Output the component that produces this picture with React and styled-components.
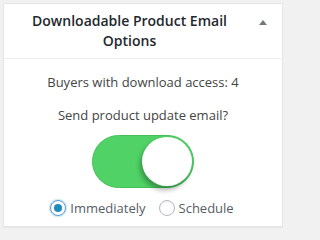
import React, { useState } from "react";
import styled, { createGlobalStyle } from "styled-components";

const Global = createGlobalStyle`
  html, body { margin: 0; padding: 0; background: #f1f1f1; }
  body { font-family: "Open Sans", "Liberation Sans", sans-serif; }
`;

const Box = styled.div`
  margin: 3px;
  width: 280px;
  height: 224px;
  box-sizing: border-box;
  background: #fff;
  border: 1px solid #e5e5e5;
  box-shadow: 0 1px 1px rgba(0, 0, 0, 0.04);
  display: flex;
  flex-direction: column;
`;

const Header = styled.div`
  display: flex;
  align-items: center;
  border-bottom: 1px solid #eee;
  padding: 7px 0 8px 11px;
`;

const Title = styled.h2`
  flex: 1;
  margin: 0;
  font-size: 14px;
  line-height: 19.5px;
  font-weight: 600;
  color: #23282d;
  text-align: center;
`;

const Toggle = styled.button`
  width: 38px;
  height: 36px;
  border: 0;
  background: none;
  padding: 0;
  display: flex;
  align-items: flex-start;
  justify-content: center;
  align-self: flex-start;
  padding-top: 9px;
`;

const Arrow = styled.span`
  width: 0;
  height: 0;
  border-left: 4px solid transparent;
  border-right: 4px solid transparent;
  border-bottom: 5px solid #72777c;
`;

const Body = styled.div`
  flex: 1;
  display: flex;
  flex-direction: column;
  align-items: center;
  padding-top: 13px;
  font-size: 13px;
  color: #444;
`;

const Line = styled.p`
  margin: 0 0 ${(p) => p.$gap}px;
  line-height: 20px;
`;

const Switch = styled.div`
  width: 102px;
  height: 53px;
  box-sizing: border-box;
  border-radius: 27px;
  background: #50d266;
  border: 1px solid #43c158;
  position: relative;
  margin-top: 10px;
`;

const Knob = styled.span`
  position: absolute;
  right: 1px;
  top: 1px;
  width: 50px;
  height: 49px;
  border-radius: 50%;
  background: #fff;
  box-shadow: -2px 4px 5px rgba(0, 0, 0, 0.3);
`;

const Radios = styled.div`
  display: flex;
  gap: 13px;
  margin-top: 10px;
  margin-left: -2px;
`;

const RadioLabel = styled.label`
  display: flex;
  align-items: center;
  gap: 4px;
  font-size: 13px;
  color: #555d66;
  line-height: 20px;
`;

const RadioDot = styled.span`
  width: 16px;
  height: 16px;
  box-sizing: border-box;
  border-radius: 50%;
  border: 1px solid ${(p) => (p.$focus ? "#5b9dd9" : "#b4b9be")};
  box-shadow: ${(p) =>
    p.$focus ? "0 0 2px rgba(30,140,190,.8)" : "inset 0 1px 2px rgba(0,0,0,.07)"};
  display: flex;
  align-items: center;
  justify-content: center;
  &::after {
    content: "";
    width: 8px;
    height: 8px;
    border-radius: 50%;
    background: #1e8cbe;
    display: ${(p) => (p.$checked ? "block" : "none")};
  }
`;

export default function App() {
  const [mode, setMode] = useState("now");
  return (
    <>
      <Global />
      <Box>
        <Header>
          <Title>Downloadable Product Email Options</Title>
          <Toggle aria-label="Toggle panel">
            <Arrow />
          </Toggle>
        </Header>
        <Body>
          <Line $gap={13}>Buyers with download access: 4</Line>
          <Line $gap={0}>Send product update email?</Line>
          <Switch>
            <Knob />
          </Switch>
          <Radios>
            <RadioLabel onClick={() => setMode("now")}>
              <RadioDot $checked={mode === "now"} $focus={mode === "now"} />
              Immediately
            </RadioLabel>
            <RadioLabel onClick={() => setMode("later")}>
              <RadioDot $checked={mode === "later"} />
              Schedule
            </RadioLabel>
          </Radios>
        </Body>
      </Box>
    </>
  );
}
